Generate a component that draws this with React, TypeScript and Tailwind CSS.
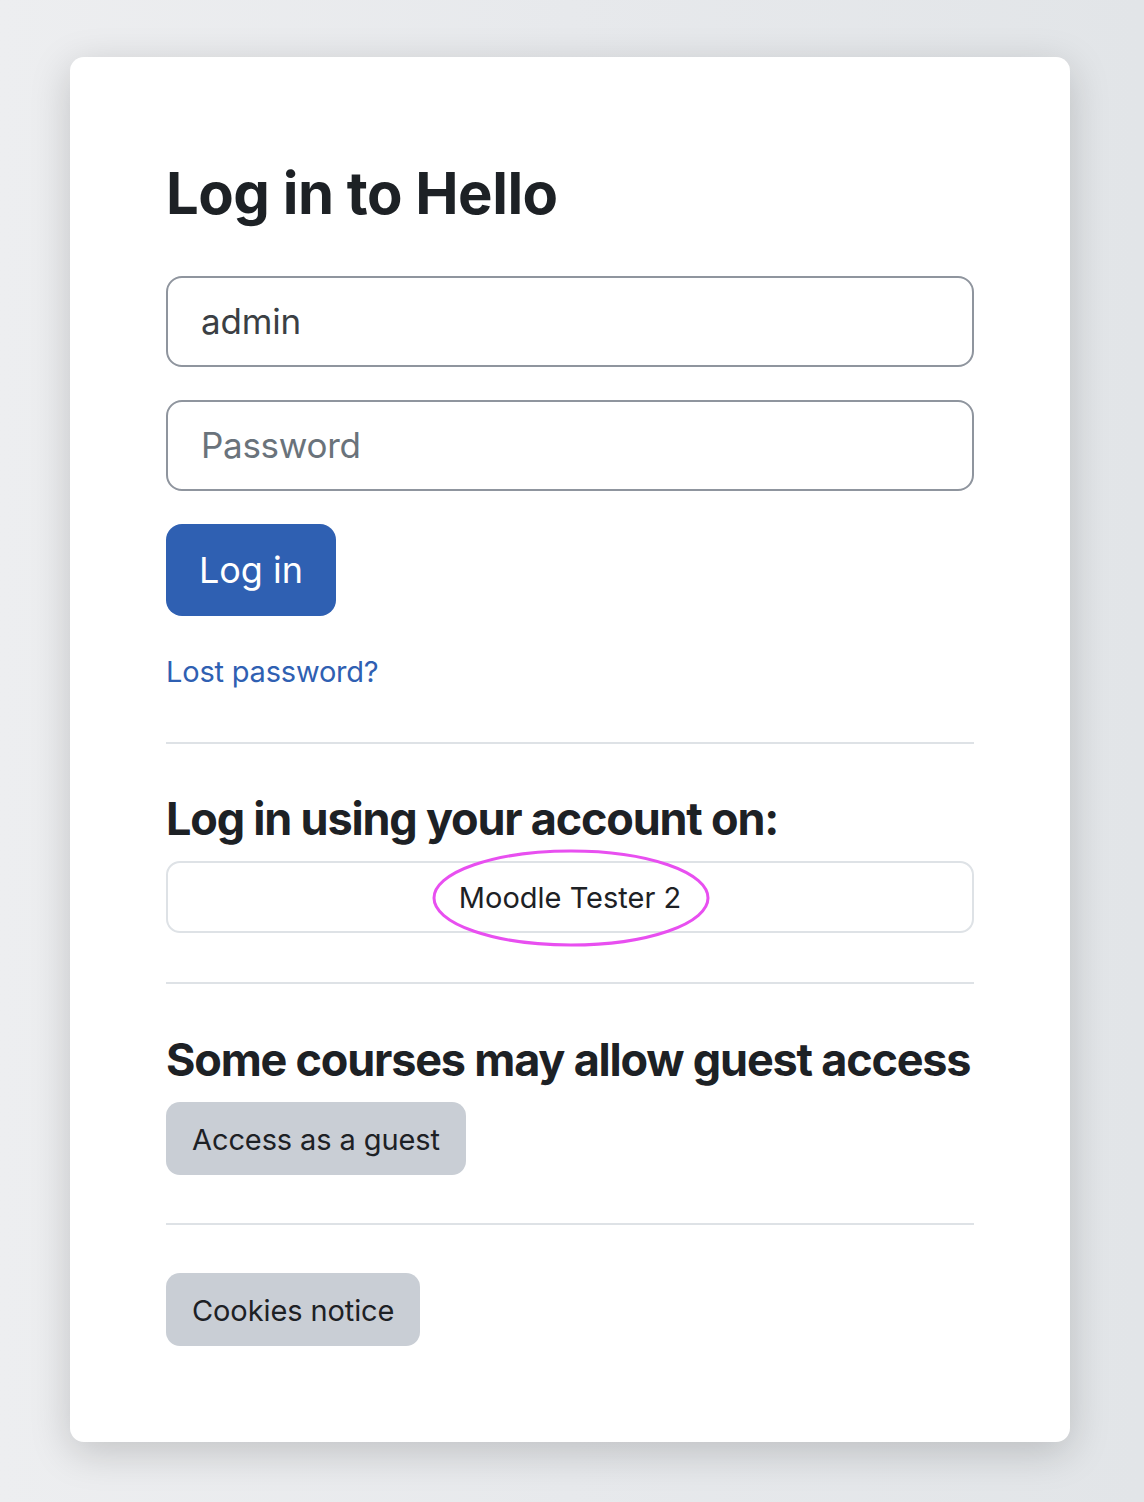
import React from "react";

export default function App() {
  return (
    <div
      className="w-[1144px] h-[1502px] bg-gradient-to-r from-[#edeef0] via-[#e7e9ec] to-[#e2e5e8] pt-[57px] pl-[70px]"
      style={{ fontFamily: "Inter, 'Noto Sans', sans-serif" }}
    >
      <div className="w-[1000px] h-[1385px] bg-white rounded-[14px] shadow-[0_10px_40px_rgba(0,0,0,0.18)] px-[96px] pt-[100px] text-[#1d2125]">
        <h1 className="text-[58px] leading-[72px] font-bold tracking-[-0.5px]">Log in to Hello</h1>

        <div className="mt-[47px] h-[91px] rounded-[16px] border-2 border-[#8f959e] flex items-center px-[33px] text-[35px] tracking-[-0.2px] text-[#3b3f44]">
          admin
        </div>
        <div className="mt-[33px] h-[91px] rounded-[16px] border-2 border-[#8f959e] flex items-center px-[33px] text-[35px] tracking-[-0.3px] text-[#6a737b]">
          Password
        </div>

        <div className="mt-[33px] w-[170px] h-[92px] rounded-[16px] bg-[#2f60b2] text-white text-[36px] flex items-center justify-center">
          Log in
        </div>

        <div className="mt-[38px] text-[29px] leading-[36px] tracking-[-0.2px] text-[#2f60b2]">Lost password?</div>

        <div className="mt-[52px] h-[2px] bg-[#dee2e6]" />

        <h2 className="mt-[47px] text-[45px] leading-[56px] font-bold tracking-[-1.2px] whitespace-nowrap">Log in using your account on:</h2>

        <div className="relative mt-[14px] h-[72px] rounded-[14px] border-2 border-[#dee2e6] flex items-center justify-center pt-[2px] text-[29px]">
          <span className="relative z-10">Moodle Tester 2</span>
          <svg
            className="absolute left-[262px] top-[-16px] pointer-events-none"
            width="282"
            height="102"
            viewBox="0 0 282 102"
          >
            <ellipse cx="141" cy="51" rx="137" ry="47" fill="none" stroke="#e84ff0" strokeWidth="3" />
          </svg>
        </div>

        <div className="mt-[49px] h-[2px] bg-[#dee2e6]" />

        <h2 className="mt-[48px] text-[45px] leading-[56px] font-bold tracking-[-1.2px] whitespace-nowrap">Some courses may allow guest access</h2>

        <div className="mt-[14px] inline-flex h-[73px] px-[26px] pt-[3px] items-center rounded-[14px] bg-[#c9ced5] text-[29px] tracking-[-0.1px]">
          Access as a guest
        </div>

        <div className="mt-[48px] h-[2px] bg-[#dee2e6]" />

        <div className="mt-[48px] inline-flex h-[73px] px-[26px] pt-[3px] items-center rounded-[14px] bg-[#c9ced5] text-[29px] tracking-[-0.1px]">
          Cookies notice
        </div>
      </div>
    </div>
  );
}
